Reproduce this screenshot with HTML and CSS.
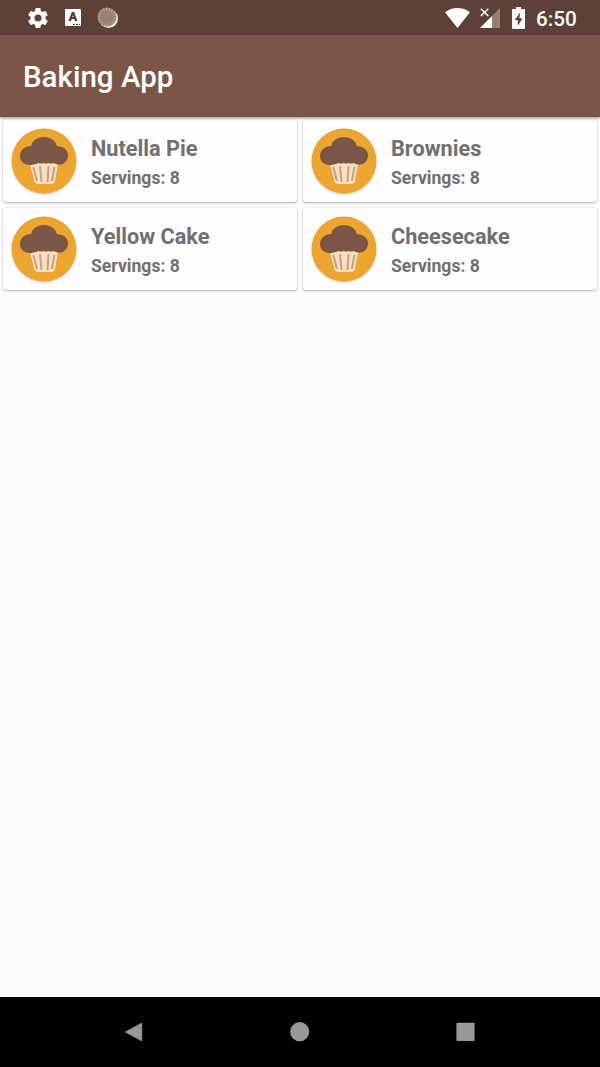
FILE: index.html
```html
<!DOCTYPE html>
<html lang="en">
<head>
<meta charset="utf-8">
<title>Baking App</title>
<link rel="stylesheet" href="styles.css">
</head>
<body>
<svg class="defs" aria-hidden="true">
  <symbol id="muffin" viewBox="0 0 66 66">
    <circle cx="33" cy="33" r="32.4" fill="#eca52d"/>
    <path d="M18.500 34H47.500L44 53Q43.500 56 40 56H27.500Q24 56 23.300 53Z" fill="#fadfbd"/>
    <path d="M22.300 39L26 53M29 38L30.500 54M37.500 38L36.500 54M43.500 39L40.800 53" stroke="#bda194" stroke-width="2" fill="none"/>
    <path fill="#7b5647" d="M20.300 18C21 12.500 26.500 9 33 9S44.500 12.500 46 18.200C52.500 18 57 22 57 27.500C57 33 52.500 37.300 47.500 36.500Q44.500 36.300 42.500 35Q40 36 37.500 35Q35 36 32.500 35Q30 36 27.500 35Q25 36 22.500 36.500C15 38.500 9 34.500 9 28C9 22 14 18 20.300 18Z"/>
  </symbol>
</svg>
<div class="status">
  <svg class="gear" viewBox="0 0 24 24"><path fill="#fff" d="M19.430 12.980c.04-.32.070-.64.070-.98s-.03-.66-.07-.98l2.110-1.650c.19-.15.240-.42.120-.64l-2-3.460c-.12-.22-.39-.3-.61-.22l-2.490 1c-.52-.4-1.080-.73-1.690-.98l-.38-2.650C14.460 2.180 14.250 2 14 2h-4c-.25 0-.46.180-.49.420l-.38 2.650c-.61.250-1.170.590-1.690.980l-2.490-1c-.23-.09-.49 0-.61.220l-2 3.460c-.13.220-.07.490.12.640l2.110 1.650c-.04.320-.07.650-.07.980s.03.660.07.980l-2.110 1.650c-.19.150-.24.420-.12.640l2 3.460c.12.220.39.300.61.220l2.490-1c.52.400 1.080.730 1.690.980l.38 2.650c.03.240.24.420.49.420h4c.25 0 .46-.18.490-.42l.38-2.650c.61-.25 1.170-.59 1.690-.98l2.490 1c.23.090.49 0 .61-.22l2-3.460c.12-.22.070-.49-.12-.64l-2.110-1.650zM12 15.500a3.500 3.500 0 1 1 0-7 3.500 3.500 0 0 1 0 7z"/></svg>
  <span class="keyboard">A<i></i></span>
  <svg class="sync" viewBox="0 0 22 22"><circle cx="11.500" cy="11.500" r="9.500" fill="#f5eeea"/><circle cx="10" cy="10" r="9.500" fill="#988178"/><circle cx="10" cy="10" r="8" fill="none" stroke="#b9a8a0" stroke-width="2.500" stroke-dasharray="1.100 1.700"/></svg>
  <span class="spacer"></span>
  <svg class="wifi" viewBox="0 0 25 20"><path fill="#fff" d="M0 4.300Q5.500 0 12.500 0T25 4.300L12.500 20Z"/></svg>
  <svg class="signal" viewBox="0 0 20 21"><path fill="#947e76" d="M20 1V21H0Z"/><path fill="#fff" d="M12 9V21H0Z"/><path d="M-1 -1H10.500V9L6 12H-1Z" fill="#5d4037"/><path d="M.8 1.800L8.300 9M8.300 1.800L.8 9" stroke="#fff" stroke-width="1.500"/></svg>
  <svg class="battery" viewBox="0 0 13 22"><path fill="#fff" d="M4 0H9V2H12Q13 2 13 3V21Q13 22 12 22H1Q0 22 0 21V3Q0 2 1 2H4Z"/><path fill="#5d4037" d="M8 5.500L2.800 13H5.800V19L10.500 11.300H7.500Z"/></svg>
  <span class="time">6:50</span>
</div>
<header class="toolbar">Baking App</header>
<main class="recipes">
  <article class="card"><svg class="muffin"><use href="#muffin"/></svg><div><h2>Nutella Pie</h2><p>Servings: 8</p></div></article>
  <article class="card"><svg class="muffin"><use href="#muffin"/></svg><div><h2>Brownies</h2><p>Servings: 8</p></div></article>
  <article class="card"><svg class="muffin"><use href="#muffin"/></svg><div><h2>Yellow Cake</h2><p>Servings: 8</p></div></article>
  <article class="card"><svg class="muffin"><use href="#muffin"/></svg><div><h2>Cheesecake</h2><p>Servings: 8</p></div></article>
</main>
<nav class="navbar">
  <svg viewBox="0 0 20 20"><path d="M17.700 1.300V18.700L1.500 10Z" fill="#999798" stroke="#999798" stroke-linejoin="round"/></svg>
  <svg viewBox="0 0 20 20"><circle cx="9.700" cy="9.700" r="9.600" fill="#999798"/></svg>
  <svg viewBox="0 0 20 20"><rect x=".4" y=".8" width="18.200" height="18.200" rx="1" fill="#999798"/></svg>
</nav>
</body>
</html>
```
FILE: styles.css
```css
* { box-sizing: border-box; }
body {
  margin: 0;
  height: 1067px;
  display: flex;
  flex-direction: column;
  overflow: hidden;
  background: #fdfbfe;
  font-family: Roboto, "Liberation Sans", sans-serif;
}
svg { display: block; flex: none; }
.defs { position: absolute; width: 0; height: 0; }
.status {
  display: flex;
  align-items: center;
  height: 35px;
  padding: 0 23px 0 26px;
  background: #5d4037;
  color: #fff;
}
.gear { width: 24px; height: 24px; }
.keyboard {
  display: flex;
  flex-direction: column;
  align-items: center;
  width: 16px;
  height: 17px;
  margin-left: 15px;
  border-radius: 1px;
  background: #fff;
  color: #4d352d;
  font-size: 13px;
  font-weight: 900;
  line-height: 16px;
}
.keyboard i {
  width: 7px;
  height: 1px;
  margin: -1px 1px 0 0;
  align-self: flex-end;
  background: repeating-linear-gradient(90deg, #5d4037 0 2px, #fff 2px 3px);
}
.sync { width: 22px; height: 22px; margin-left: 16px; }
.spacer { flex: 1; }
.wifi { width: 25px; height: 20px; }
.signal { width: 20px; height: 21px; margin-left: 10px; }
.battery { width: 13px; height: 22px; margin-left: 12px; }
.time { width: 41px; margin-left: 11px; padding-top: 2px; font-size: 20.700px; font-weight: 500; line-height: 24px; }
.toolbar {
  z-index: 1;
  height: 82px;
  padding: 1px 23px 0;
  background: #7b5647;
  box-shadow: 0 1px 3px rgba(0, 0, 0, .45);
  color: #fff;
  font-size: 29.500px;
  font-weight: 500;
  line-height: 83px;
}
.recipes {
  flex: 1;
  display: grid;
  grid-template-columns: 294px 294px;
  grid-auto-rows: 82px;
  align-content: start;
  gap: 6px;
  padding: 3px 3px 0;
}
.card {
  display: flex;
  gap: 14px;
  padding: 8px 8px 0;
  border-radius: 3px;
  background: #fefdff;
  box-shadow: 0 1px 2px rgba(0, 0, 0, .28), 0 0 2px rgba(0, 0, 0, .12);
}
.muffin { width: 66px; height: 66px; filter: drop-shadow(0 1px 1px rgba(0, 0, 0, .2)); }
.card h2, .card p { margin: 0; color: #707070; }
.card h2 { padding-top: 7px; font-size: 21.700px; font-weight: 700; line-height: 28px; }
.card p { margin-top: 3px; font-size: 17.600px; font-weight: 700; line-height: 24px; }
.navbar {
  display: flex;
  align-items: center;
  justify-content: space-between;
  height: 70px;
  padding: 0 124px;
  background: #000;
}
.navbar svg { width: 20px; height: 20px; }
```
